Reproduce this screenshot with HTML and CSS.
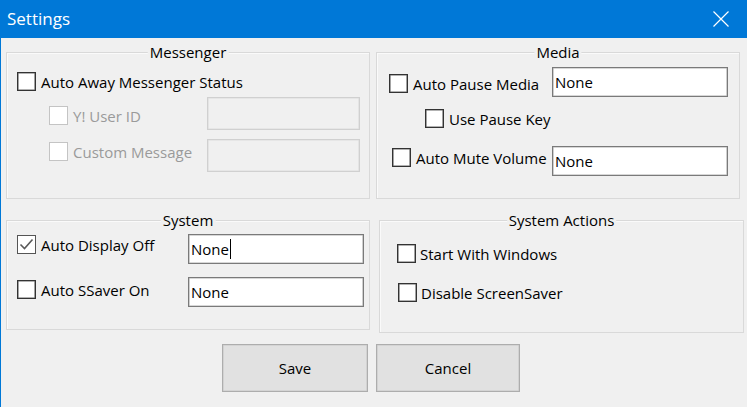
FILE: index.html
```html
<!DOCTYPE html>
<html lang="en">
<head>
  <meta charset="UTF-8">
  <meta name="viewport" content="width=device-width, initial-scale=1.0">
  <title>Settings</title>
  <link rel="stylesheet" href="styles.css">
</head>
<body>
  <div class="window">
    <div class="titlebar">
      <span class="title">Settings</span>
      <svg class="close" width="16" height="16" viewBox="0 0 16 16">
        <path d="M0.5 0.5 L15.5 15.5 M15.5 0.5 L0.5 15.5" stroke="#fff" stroke-width="1.2" fill="none"/>
      </svg>
    </div>

    <div class="client">
      <!-- top row: messenger + media -->
      <div class="group-row top-row">
        <div class="group messenger">
          <span class="group-title">Messenger</span>
          <label class="check away"><span class="box"></span>Auto Away Messenger Status</label>
          <div class="line user-line">
            <label class="check disabled"><span class="box"></span>Y! User ID</label>
            <span class="field disabled"></span>
          </div>
          <div class="line msg-line">
            <label class="check disabled"><span class="box"></span>Custom Message</label>
            <span class="field disabled"></span>
          </div>
        </div>

        <div class="group media">
          <span class="group-title">Media</span>
          <div class="line pause-line">
            <label class="check"><span class="box"></span>Auto Pause Media</label>
            <span class="field">None</span>
          </div>
          <label class="check pause-key"><span class="box"></span>Use Pause Key</label>
          <div class="line mute-line">
            <label class="check"><span class="box"></span>Auto Mute Volume</label>
            <span class="field">None</span>
          </div>
        </div>
      </div>

      <!-- second row: system + system actions -->
      <div class="group-row">
        <div class="group system">
          <span class="group-title">System</span>
          <div class="line display-line">
            <label class="check checked">
              <span class="box">
                <svg width="17" height="17" viewBox="0 0 17 17">
                  <path d="M2.5 8.5 L6.5 12.5 L14.5 3.5" stroke="#5a5a5a" stroke-width="1.6" fill="none"/>
                </svg>
              </span>Auto Display Off
            </label>
            <span class="field focused">None<span class="caret"></span></span>
          </div>
          <div class="line ssaver-line">
            <label class="check"><span class="box"></span>Auto SSaver On</label>
            <span class="field">None</span>
          </div>
        </div>

        <div class="group actions">
          <span class="group-title">System Actions</span>
          <label class="check start"><span class="box"></span>Start With Windows</label>
          <label class="check screensaver"><span class="box"></span>Disable ScreenSaver</label>
        </div>
      </div>

      <div class="buttons">
        <button class="btn save">Save</button>
        <button class="btn cancel">Cancel</button>
      </div>
    </div>
  </div>
</body>
</html>
```

FILE: styles.css
```css
body {
  margin: 0;
  background-color: #f0f0f0;
  font-family: "Open Sans", "Noto Sans", sans-serif;
  font-size: 15px;
  color: #000;
}

.window {
  width: 746px;
  height: 407px;
  border-left: 1px solid #0078d7;
  overflow: hidden;
}

.titlebar {
  height: 38px;
  background-color: #0078d7;
  display: flex;
  align-items: center;
  padding-left: 6px;
  padding-right: 18px;
  color: #fff;
}

.title {
  font-size: 17px;
  flex: 1;
  margin-top: -1px;
}

.close {
  display: block;
}

.client {
  padding-left: 5px;
  padding-top: 14px;
}

.group-row {
  display: flex;
  align-items: flex-start;
  gap: 6px;
}

.top-row {
  margin-bottom: 21px;
}

.group {
  position: relative;
  box-sizing: border-box;
  border: 1px solid #d9d9d9;
  box-shadow: inset 1px 1px 0 #fafafa;
}

.group-title {
  position: absolute;
  top: -12px;
  left: 50%;
  transform: translateX(-50%);
  padding: 0 2px;
  line-height: 22px;
  background-color: #f0f0f0;
  white-space: nowrap;
}

/* checkboxes */

.check {
  display: flex;
  align-items: center;
  height: 19px;
  white-space: nowrap;
}

.box {
  box-sizing: border-box;
  width: 19px;
  height: 19px;
  margin-right: 5px;
  border: 1px solid #333;
  box-shadow: inset 0 0 0 0.6px #666;
  background-color: #fff;
  flex: none;
}

.box svg {
  display: block;
}

.check.checked .box {
  border-color: #555;
  box-shadow: none;
}

.check.disabled {
  color: #9a9a9a;
}

.check.disabled .box {
  border-color: #c4c4c4;
  box-shadow: none;
}

/* text fields */

.line {
  display: flex;
  align-items: flex-start;
}

.field {
  box-sizing: border-box;
  display: flex;
  align-items: center;
  width: 176px;
  height: 30px;
  padding-left: 2px;
  border: 1px solid #7a7a7a;
  box-shadow: inset 0 0 0 0.6px #b0b0b0;
  background-color: #fff;
}

.field.disabled {
  width: 153px;
  height: 33px;
  border-color: #d0d0d0;
  box-shadow: inset 0 0 0 0.6px #dcdcdc;
  background-color: #f0f0f0;
}

.caret {
  display: inline-block;
  width: 1px;
  height: 20px;
  margin-left: 1px;
  background-color: #000;
}

/* messenger */

.messenger {
  width: 364px;
  height: 147px;
}

.messenger .away {
  margin: 19px 0 0 10px;
}

.messenger .line .check {
  width: 158px;
  margin-left: 42px;
}

.user-line {
  margin-top: 6px;
}

.user-line .check {
  margin-top: 9px;
}

.msg-line {
  margin-top: 9px;
}

.msg-line .check {
  margin-top: 3px;
}

/* media */

.media {
  width: 364px;
  height: 147px;
}

.pause-line {
  margin: 14px 0 0 12px;
}

.pause-line .check {
  width: 163px;
  margin-top: 7px;
}

.pause-key {
  margin: 12px 0 0 48px;
}

.mute-line {
  margin: 18px 0 0 15px;
}

.mute-line .check {
  width: 160px;
  margin-top: 2px;
}

/* system */

.system {
  width: 364px;
  height: 110px;
}

.system .line {
  margin-left: 10px;
}

.system .line .check {
  width: 171px;
}

.display-line {
  margin-top: 13px;
}

.display-line .check {
  margin-top: 1px;
}

.ssaver-line {
  margin-top: 13px;
}

.ssaver-line .check {
  margin-top: 3px;
}

/* system actions */

.actions {
  width: 365px;
  height: 113px;
  margin-left: 3px;
}

.actions .start {
  margin: 23px 0 0 17px;
}

.actions .screensaver {
  margin: 20px 0 0 18px;
}

.actions .check .box {
  margin-right: 4px;
}

/* buttons */

.buttons {
  display: flex;
  gap: 8px;
  margin-top: 11px;
  margin-left: 216px;
}

.btn {
  box-sizing: border-box;
  height: 48px;
  border: 1px solid #adadad;
  box-shadow: inset 0 0 0 0.6px #c8c8c8;
  background-color: #e1e1e1;
  font-family: inherit;
  font-size: 15px;
  color: #000;
  padding: 0;
}

.save {
  width: 146px;
}

.cancel {
  width: 144px;
}
```
